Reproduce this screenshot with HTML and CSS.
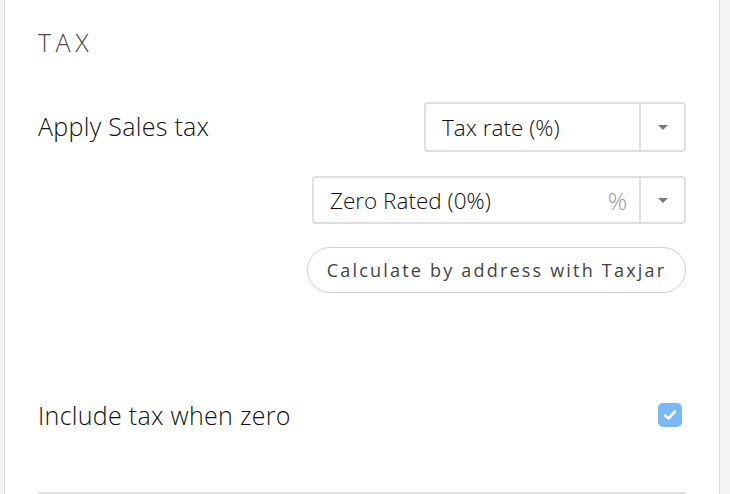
FILE: index.html
```html
<!DOCTYPE html>
<html>
<head>
<meta charset="utf-8">
<link rel="stylesheet" href="styles.css">
</head>
<body>
<div class="panel">
  <h2 class="section-title">TAX</h2>
  <div class="row-apply">
    <div class="label label-apply">Apply Sales tax</div>
    <div class="controls">
      <div class="select select-type">
        <span class="select-value">Tax rate (%)</span>
        <span class="select-caret"><span class="caret"></span></span>
      </div>
      <div class="select select-rate">
        <span class="select-value">Zero Rated (0%)</span>
        <span class="select-unit">%</span>
        <span class="select-caret"><span class="caret"></span></span>
      </div>
      <button class="pill-btn">Calculate by address with Taxjar</button>
    </div>
  </div>
  <div class="row-include">
    <div class="label">Include tax when zero</div>
    <span class="checkbox">
      <svg width="14" height="12" viewBox="0 0 14 12"><path d="M2 6.5 L5.5 9.5 L12 2.5" fill="none" stroke="#fff" stroke-width="2.6" stroke-linecap="round" stroke-linejoin="round"/></svg>
    </span>
  </div>
  <div class="divider"></div>
</div>
</body>
</html>
```

FILE: styles.css
```css
html, body {
  margin: 0;
  padding: 0;
}
body {
  background: #f4f4f4;
  font-family: "Open Sans", "Liberation Sans", sans-serif;
  width: 730px;
  height: 494px;
  overflow: hidden;
}
.panel {
  box-sizing: border-box;
  margin-left: 4px;
  width: 716px;
  height: 494px;
  background: #fff;
  border-left: 1px solid #dcdcdc;
  border-right: 1px solid #dcdcdc;
  padding: 28px 33px 0 33px;
}
.section-title {
  margin: 0;
  font-size: 25px;
  font-weight: 300;
  line-height: 28px;
  letter-spacing: 4.5px;
  color: #4a4a4a;
}
.row-apply {
  margin-top: 46px;
  display: flex;
  justify-content: space-between;
  align-items: flex-start;
}
.label {
  font-size: 25px;
  font-weight: 300;
  line-height: 24px;
  letter-spacing: 0.3px;
  color: #111;
}
.label-apply {
  line-height: 48px;
}
.controls {
  display: flex;
  flex-direction: column;
  align-items: flex-end;
}
.select {
  box-sizing: border-box;
  display: flex;
  align-items: center;
  border: 2px solid #e0e0e0;
  border-radius: 4px;
  background: #fff;
  color: #111;
  font-size: 22.5px;
  font-weight: 300;
}
.select-type {
  width: 262px;
  height: 50px;
}
.select-rate {
  width: 374px;
  height: 48px;
  margin-top: 24px;
}
.select-value {
  flex: 1;
  padding-left: 16px;
}
.select-unit {
  color: #999;
  font-size: 24px;
  padding-right: 12px;
}
.select-caret {
  width: 43px;
  align-self: stretch;
  border-left: 2px solid #e0e0e0;
  display: flex;
  align-items: center;
  justify-content: center;
}
.caret {
  width: 0;
  height: 0;
  border-left: 5px solid transparent;
  border-right: 5px solid transparent;
  border-top: 5px solid #777;
}
.pill-btn {
  margin-top: 23px;
  width: 379px;
  height: 46px;
  border: 1px solid #cfcfcf;
  border-radius: 23px;
  background: #fff;
  font-family: inherit;
  font-size: 18px;
  letter-spacing: 2.2px;
  color: #444;
  padding: 0;
}
.row-include {
  margin-top: 110px;
  display: flex;
  justify-content: space-between;
  align-items: center;
}
.checkbox {
  width: 24px;
  height: 24px;
  margin-right: 4px;
  border-radius: 5px;
  background: #7ab8f5;
  display: flex;
  align-items: center;
  justify-content: center;
}
.divider {
  margin-top: 65px;
  height: 2px;
  background: #e0e0e0;
}
```
